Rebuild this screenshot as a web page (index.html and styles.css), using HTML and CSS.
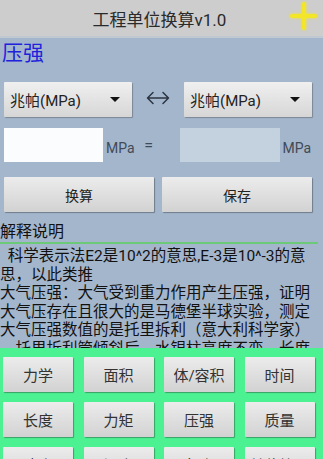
FILE: index.html
```html
<!DOCTYPE html>
<html lang="zh-CN">
<head>
  <meta charset="UTF-8" />
  <meta name="viewport" content="width=device-width, initial-scale=1.0"/>
  <title>工程单位换算v1.0</title>
  <link rel="stylesheet" href="styles.css">
</head>
<body>
  <div class="titlebar">
    <span class="title">工程单位换算v1.0</span>
    <span class="plus"></span>
  </div>

  <div class="main">
    <h1 class="kind">压强</h1>

    <div class="row pick-row">
      <div class="spinner">兆帕(MPa)<span class="caret"></span></div>
      <span class="swap">
        <svg width="24" height="14" viewBox="0 0 24 14" fill="none" stroke="#2c3440" stroke-width="1.5" stroke-linecap="round" stroke-linejoin="round">
          <path d="M1.5 7h21M7 1.5 1.5 7 7 12.5M17 1.5 22.5 7 17 12.5"/>
        </svg>
      </span>
      <div class="spinner">兆帕(MPa)<span class="caret"></span></div>
    </div>

    <div class="row value-row">
      <div class="box"></div>
      <span class="unit">MPa</span>
      <span class="eq">=</span>
      <div class="box result"></div>
      <span class="unit">MPa</span>
    </div>

    <div class="row act-row">
      <button class="btn">换算</button>
      <button class="btn">保存</button>
    </div>

    <h2 class="note-head">解释说明</h2>
    <div class="note">
      <p>&nbsp;&nbsp;科学表示法E2是10^2的意思,E-3是10^-3的意思，以此类推</p>
      <p>大气压强：大气受到重力作用产生压强，证明大气压存在且很大的是马德堡半球实验，测定大气压强数值的是托里拆利（意大利科学家）。托里拆利管倾斜后，水银柱高度不变，长度变长。</p>
    </div>
  </div>

  <div class="panel">
    <button class="btn">力学</button>
    <button class="btn">面积</button>
    <button class="btn">体/容积</button>
    <button class="btn">时间</button>
    <button class="btn">长度</button>
    <button class="btn">力矩</button>
    <button class="btn">压强</button>
    <button class="btn">质量</button>
    <button class="btn">速度</button>
    <button class="btn">温度</button>
    <button class="btn">角度</button>
    <button class="btn">单位符号</button>
  </div>
</body>
</html>
```

FILE: styles.css
```css
body {
  margin: 0; width: 323px; height: 459px; overflow: hidden;
  display: flex; flex-direction: column;
  font-family: Roboto, "Noto Sans CJK SC", sans-serif;
  background: #a4b6cc; color: #111;
}
.titlebar {
  height: 36px; flex: none; background: #cdcdcd;
  border-bottom: 2px solid #c0c8d2;
  display: grid; grid-template-columns: 1fr auto 1fr; align-items: center;
}
.title { grid-column: 2; font-size: 17px; color: #2a2a2a; margin-left: -4px; }
.plus { grid-column: 3; justify-self: end; margin-right: 6px; position: relative; width: 27px; height: 28px; margin-top: -5px; }
.plus::before, .plus::after {
  content: ""; position: absolute; background: #f3e629; border-radius: 2px;
  box-shadow: 0 0 3px #f3e629;
}
.plus::before { left: 0; right: 0; top: 12px; height: 4px; }
.plus::after { top: 0; bottom: 0; left: 12px; width: 4px; }

.main { flex: 1; min-height: 0; overflow: hidden; display: flex; flex-direction: column; }
.kind {
  margin: 2px 0 0 2px; font-size: 21px; line-height: 26px; font-weight: normal;
  color: #1e22dc;
}
.row { display: flex; align-items: center; padding-left: 4px; }
.pick-row { margin-top: 16px; }
.spinner {
  width: 128px; height: 35px; box-sizing: border-box; padding-left: 6px;
  display: flex; align-items: center; font-size: 15px; color: #222;
  background: linear-gradient(#f0f0f0, #d6d6d6);
  box-shadow: 1px 1px 1px #7d8794; border-radius: 1px;
}
.caret {
  margin-left: auto; margin-right: 12px;
  border-left: 5px solid transparent; border-right: 5px solid transparent;
  border-top: 5px solid #111;
}
.swap { width: 52px; display: flex; justify-content: center; margin-top: -4px; }

.value-row { margin-top: 11px; }
.box { width: 99px; height: 34px; background: #fbfcfd; }
.box.result { background: #c4d1de; width: 100px; }
.unit { font-size: 14px; color: #414a56; margin-left: 3px; padding-top: 5px; }
.eq { width: 12px; margin: 0 25px 0 8px; text-align: center; font-size: 16px; color: #414a56; }

.act-row { margin-top: 15px; gap: 8px; }
.btn {
  font-family: Roboto, "Noto Sans CJK SC", sans-serif;
  height: 35px; border: none; border-radius: 1px; font-size: 14px; color: #222;
  background: linear-gradient(#ececec, #d2d2d2);
  box-shadow: 1px 1px 1px #6f7c8a; padding: 0;
}
.act-row .btn { width: 150px; }

.note-head {
  margin: 10px 0 0; font-size: 16px; line-height: 20px; font-weight: normal; color: #111;
  border-bottom: 2px solid #6cc978; width: 318px;
}
.note { font-size: 15.5px; line-height: 18.5px; margin-top: 3px; width: 316px; line-break: anywhere; }
.note p { margin: 0; }

.panel {
  flex: none; height: 102px; padding: 9px 0 0 3px; background: #4cf292;
  display: grid; grid-template-columns: repeat(4, 70px); grid-auto-rows: 35px;
  column-gap: 10.5px; row-gap: 10px; overflow: hidden;
}
.panel .btn { box-shadow: 1px 1px 1px #3aa067; font-size: 15px; color: #333; }
```
